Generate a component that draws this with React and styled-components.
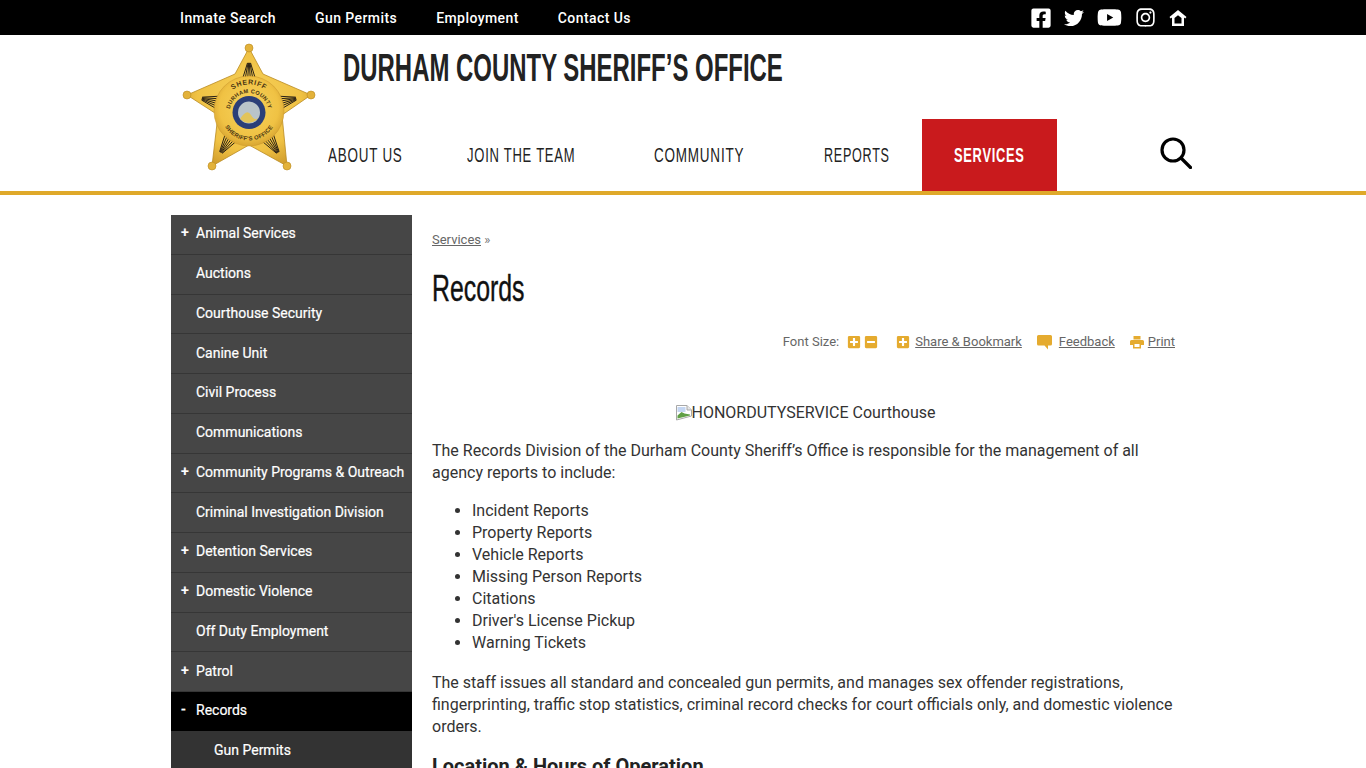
import React from 'react';
import styled, { createGlobalStyle } from 'styled-components';
import { FaFacebookSquare, FaTwitter, FaYoutube, FaInstagram, FaPlusSquare, FaMinusSquare } from 'react-icons/fa';

const gold = '#dfa92a';
const iconGold = '#e5ab2f';
const headFont = '"Liberation Sans", sans-serif';

const GlobalStyle = createGlobalStyle`
html, body { margin: 0; height: 768px; overflow: hidden; background: #fff; }
body { font-family: Roboto, sans-serif; font-size: 16px; line-height: 22px; color: #333; }
`;

const TopBar = styled.div`
background: #000;
height: 35px;
`;
const TopInner = styled.div`
width: 1024px;
margin: 0 auto;
padding-left: 9px;
box-sizing: border-box;
height: 35px;
display: flex;
align-items: center;
`;
const TopLink = styled.a`
color: #fff;
font-size: 14px;
font-weight: 500;
letter-spacing: 0.42px;
margin-right: 39px;
white-space: nowrap;
`;
const Socials = styled.div`
margin-left: auto;
display: flex;
align-items: center;
color: #fff;
padding-right: 8px;
height: 35px;
gap: 13px;
svg:first-child { margin-right: -1px; }
`;

const Header = styled.header`
height: 156px;
border-bottom: 4px solid ${gold};
`;
const HeaderInner = styled.div`
width: 1024px;
margin: 0 auto;
display: flex;
position: relative;
height: 156px;
`;
const Logo = styled.div`
width: 157px;
flex: none;
padding-top: 5px;
padding-left: 10px;
box-sizing: border-box;
`;
const HeaderMain = styled.div`
flex: 1;
display: flex;
flex-direction: column;
`;
const SiteTitle = styled.h2`
margin: 12px 0 0 15px;
height: 72px;
font-family: ${headFont};
font-size: 38px;
line-height: 42px;
font-weight: 700;
color: #222;
white-space: nowrap;
transform: scaleX(0.63);
transform-origin: left top;
`;
const Nav = styled.nav`
display: flex;
height: 72px;
margin-left: -32px;
`;
const NavItem = styled.a`
width: ${p => p.$w}px;
margin-right: ${p => p.$mr || 0}px;
padding-left: 32px;
box-sizing: border-box;
flex: none;
background: ${p => (p.$active ? '#c91a1d' : 'transparent')};
`;
const NavLabel = styled.span`
display: inline-block;
font-family: ${headFont};
font-size: 21px;
font-weight: ${p => (p.$active ? 700 : 400)};
line-height: 72px;
letter-spacing: 1.2px;
white-space: nowrap;
color: ${p => (p.$active ? '#fff' : '#222')};
transform: scaleX(${p => p.$sx});
transform-origin: left center;
`;
const SearchButton = styled.a`
margin-left: 103px;
margin-top: 18px;
width: 32px;
height: 32px;
flex: none;
`;

const Page = styled.div`
width: 1024px;
margin: 20px auto 0;
display: flex;
`;
const Side = styled.ul`
list-style: none;
margin: 0;
padding: 0;
width: 241px;
flex: none;
`;
const SideRow = styled.li`
height: 39.75px;
box-sizing: border-box;
display: flex;
align-items: center;
padding-left: ${p => (p.$sub ? 43 : 10)}px;
padding-bottom: 2px;
background: ${p => (p.$active ? '#000' : p.$sub ? '#333' : '#464646')};
border-bottom: 1px solid ${p => (p.$active ? '#333' : '#363636')};
color: #fff;
font-size: 14px;
font-weight: 400;
-webkit-text-stroke: 0.2px #fff;
white-space: nowrap;
`;
const Toggle = styled.span`
width: 15px;
flex: none;
font-size: 14px;
font-weight: 500;
margin-top: -2px;
`;

const Content = styled.main`
margin-left: 20px;
width: 743px;
flex: none;
`;
const Crumbs = styled.div`
margin-top: 15px;
height: 20px;
font-size: 13px;
line-height: 20px;
color: #777;
a { color: #666; text-decoration: underline; }
`;
const Heading = styled.h1`
margin: 19px 0 0;
height: 43px;
font-family: ${headFont};
font-size: 36px;
line-height: 40px;
font-weight: 400;
color: #111;
-webkit-text-stroke: 0.4px #111;
transform: scaleX(0.69);
transform-origin: left top;
`;
const Tools = styled.div`
margin-top: 19px;
height: 22px;
display: flex;
justify-content: flex-end;
align-items: center;
font-size: 13px;
color: #666;
`;
const ToolLink = styled.a`
display: inline-flex;
align-items: center;
gap: ${p => p.$gap || 5}px;
margin-left: ${p => p.$ml || 0}px;
span { text-decoration: underline; color: #666; }
svg { color: ${iconGold}; flex: none; }
`;
const SizeIcons = styled.span`
display: inline-flex;
gap: 3px;
margin-left: 8px;
margin-right: -1px;
color: ${iconGold};
`;
const Figure = styled.div`
margin-top: 49px;
height: 22px;
padding-left: 4px;
display: flex;
justify-content: center;
align-items: center;
`;
const Text = styled.p`
margin: ${p => p.$mt || 18}px 0 0;
`;
const Bullets = styled.ul`
margin: 16px 0 0;
padding-left: 40px;
`;
const Sub = styled.h3`
margin: 15px 0 0;
font-size: 20px;
line-height: 26px;
font-weight: 700;
color: #222;
`;

const tips = [[68, 8], [130, 55], [106, 126], [31, 126], [6, 55]];
const centre = [68, 70];

// stripes fan out from each star tip towards the round middle of the badge
function armStripes([tx, ty]) {
    const dx = centre[0] - tx;
    const dy = centre[1] - ty;
    const len = Math.hypot(dx, dy);
    const px = -dy / len;
    const py = dx / len;
    return [-2.5, -1.5, -0.5, 0.5, 1.5, 2.5].map(i => ({
        x1: tx + dx * 0.24 + px * i * 0.6,
        y1: ty + dy * 0.24 + py * i * 0.6,
        x2: tx + dx * 0.58 + px * i * 3.2,
        y2: ty + dy * 0.58 + py * i * 3.2,
    }));
}

function Badge() {
    return (
        <svg width="136" height="136" viewBox="0 0 136 136">
            <defs>
                <radialGradient id="goldFill" cx="50%" cy="45%" r="60%">
                    <stop offset="0" stopColor="#f6d25c" />
                    <stop offset="0.7" stopColor="#f0c244" />
                    <stop offset="1" stopColor="#d09c2c" />
                </radialGradient>
                <path id="arcTop" d="M40 72.500 A 28 28 0 0 1 96 72.500" />
                <path id="arcMid" d="M49.700 79.200 A 19.500 19.500 0 1 1 86.300 79.200" />
                <path id="arcLow" d="M40 72.500 A 28 28 0 0 0 96 72.500" />
            </defs>
            <polygon
                points="68,8 82,34 130,55 101,75 106,126 68,105 31,126 37,75 6,55 54,34"
                fill="url(#goldFill)"
                stroke="#b98a22"
                strokeWidth="0.8"
            />
            {tips.map(([x, y]) => (
                <circle key={x} cx={x} cy={y} r="4" fill="#e3b23a" stroke="#b98a22" strokeWidth="0.6" />
            ))}
            {tips.map((tip, t) =>
                armStripes(tip).map((s, i) => (
                    <line key={`${t}-${i}`} {...s} stroke="#2a2115" strokeWidth="1" />
                ))
            )}
            <circle cx="68" cy="71" r="35" fill="url(#goldFill)" stroke="#c9942a" strokeWidth="0.5" />
            <text fontFamily="Liberation Sans, sans-serif" fontSize="7" fill="#4a3512" fontWeight="700" letterSpacing="0.7">
                <textPath href="#arcTop" startOffset="50%" textAnchor="middle">SHERIFF</textPath>
            </text>
            <text fontFamily="Liberation Sans, sans-serif" fontSize="5.6" fill="#4a3512" fontWeight="700" letterSpacing="0.3">
                <textPath href="#arcMid" startOffset="50%" textAnchor="middle">DURHAM COUNTY</textPath>
            </text>
            <text fontFamily="Liberation Sans, sans-serif" fontSize="5.800" fill="#4a3512" fontWeight="700" letterSpacing="0.3">
                <textPath href="#arcLow" startOffset="50%" textAnchor="middle">SHERIFF'S OFFICE</textPath>
            </text>
            <circle cx="68" cy="72.500" r="16.500" fill="#2b3f78" />
            <circle cx="68" cy="72.500" r="11" fill="#b9c4c9" />
            <path d="M59 79 Q66 68 70 75 T78 77 Q74 83 67 83 Q62 82 59 79Z" fill="#e2c45a" />
        </svg>
    );
}

function HomeIcon() {
    return (
        <svg width="18" height="18" viewBox="0 0 18 18">
            <path fillRule="evenodd" d="M9 1 0.500 8l1.300 1.500L3 8.600V17h12V8.600l1.200 0.900L17.500 8zM5.500 9 9 6.200 12.500 9v5.500h-7z" fill="#fff" />
        </svg>
    );
}

function SearchIcon() {
    return (
        <svg width="32" height="32" viewBox="0 0 32 32" fill="none" stroke="#000" strokeWidth="3.2">
            <circle cx="13" cy="13" r="11" />
            <line x1="21" y1="21" x2="30.500" y2="30.500" strokeLinecap="round" />
        </svg>
    );
}

function BubbleIcon() {
    return (
        <svg width="15" height="15" viewBox="0 0 15 15">
            <path d="M1.500 0h12A1.500 1.500 0 0 1 15 1.500v7.500a1.500 1.500 0 0 1-1.500 1.500h-2.500v4L7.500 10.500H1.500A1.500 1.500 0 0 1 0 9V1.500A1.500 1.500 0 0 1 1.500 0z" fill={iconGold} />
        </svg>
    );
}

function PrintIcon() {
    return (
        <svg width="14" height="13" viewBox="0 0 14 13">
            <path fillRule="evenodd" d="M3.500 0h7v3.500h-7zM1.500 4h11A1.500 1.500 0 0 1 14 5.500V9h-3v3.500H3V9H0V5.500A1.500 1.500 0 0 1 1.500 4zM4.500 8v3h5V8z" fill={iconGold} />
        </svg>
    );
}

function BrokenImage() {
    return (
        <svg width="16" height="16" viewBox="0 0 16 16">
            <path d="M0.500 0.500h10.500l4.500 4.500v6l-15 4z" fill="#fff" stroke="#a8a8a8" />
            <path d="M11 0.500v4.500h4.500" fill="#e8e8e8" stroke="#a8a8a8" />
            <path d="M1.500 2h8v5h-8z" fill="#c4d6f2" />
            <path d="M1.500 13.500v-3l4-3.500 3 1.500 5.500 1v1z" fill="#5f9f45" />
        </svg>
    );
}

const topLinks = ['Inmate Search', 'Gun Permits', 'Employment', 'Contact Us'];
const navItems = [
    { label: 'ABOUT US', w: 139, sx: 0.64 },
    { label: 'JOIN THE TEAM', w: 172, mr: 15, sx: 0.62 },
    { label: 'COMMUNITY', w: 154, mr: 16, sx: 0.643 },
    { label: 'REPORTS', w: 130, sx: 0.6 },
    { label: 'SERVICES', w: 135, active: true, sx: 0.612 },
];
const sideItems = [
    { label: 'Animal Services', toggle: '+' },
    { label: 'Auctions' },
    { label: 'Courthouse Security' },
    { label: 'Canine Unit' },
    { label: 'Civil Process' },
    { label: 'Communications' },
    { label: 'Community Programs & Outreach', toggle: '+' },
    { label: 'Criminal Investigation Division' },
    { label: 'Detention Services', toggle: '+' },
    { label: 'Domestic Violence', toggle: '+' },
    { label: 'Off Duty Employment' },
    { label: 'Patrol', toggle: '+' },
    { label: 'Records', toggle: '-', active: true },
    { label: 'Gun Permits', sub: true },
];
const reports = ['Incident Reports', 'Property Reports', 'Vehicle Reports', 'Missing Person Reports', 'Citations', "Driver's License Pickup", 'Warning Tickets'];

export default function App() {
    return (
        <>
            <GlobalStyle />
            <TopBar>
                <TopInner>
                    {topLinks.map(l => <TopLink key={l}>{l}</TopLink>)}
                    <Socials>
                        <FaFacebookSquare size={22} />
                        <FaTwitter size={20} />
                        <FaYoutube size={25} />
                        <FaInstagram size={21} />
                        <HomeIcon />
                    </Socials>
                </TopInner>
            </TopBar>
            <Header>
                <HeaderInner>
                    <Logo><Badge /></Logo>
                    <HeaderMain>
                        <SiteTitle>DURHAM COUNTY SHERIFF’S OFFICE</SiteTitle>
                        <Nav>
                            {navItems.map(n => (
                                <NavItem key={n.label} $w={n.w} $mr={n.mr} $active={n.active}>
                                    <NavLabel $sx={n.sx} $active={n.active}>{n.label}</NavLabel>
                                </NavItem>
                            ))}
                            <SearchButton><SearchIcon /></SearchButton>
                        </Nav>
                    </HeaderMain>
                </HeaderInner>
            </Header>
            <Page>
                <Side>
                    {sideItems.map(s => (
                        <SideRow key={s.label} $active={s.active} $sub={s.sub}>
                            {!s.sub && <Toggle>{s.toggle}</Toggle>}
                            {s.label}
                        </SideRow>
                    ))}
                </Side>
                <Content>
                    <Crumbs><a>Services</a> »</Crumbs>
                    <Heading>Records</Heading>
                    <Tools>
                        Font Size:
                        <SizeIcons><FaPlusSquare size={14} /><FaMinusSquare size={14} /></SizeIcons>
                        <ToolLink $ml={19} $gap={5}><FaPlusSquare size={14} /><span>Share &amp; Bookmark</span></ToolLink>
                        <ToolLink $ml={15} $gap={7}><BubbleIcon /><span>Feedback</span></ToolLink>
                        <ToolLink $ml={15} $gap={4}><PrintIcon /><span>Print</span></ToolLink>
                    </Tools>
                    <Figure><BrokenImage />HONORDUTYSERVICE Courthouse</Figure>
                    <Text $mt={16}>The Records Division of the Durham County Sheriff’s Office is responsible for the management of all agency reports to include:</Text>
                    <Bullets>
                        {reports.map(r => <li key={r}>{r}</li>)}
                    </Bullets>
                    <Text>The staff issues all standard and concealed gun permits, and manages sex offender registrations, fingerprinting, traffic stop statistics, criminal record checks for court officials only, and domestic violence orders.</Text>
                    <Sub>Location &amp; Hours of Operation</Sub>
                </Content>
            </Page>
        </>
    );
}
